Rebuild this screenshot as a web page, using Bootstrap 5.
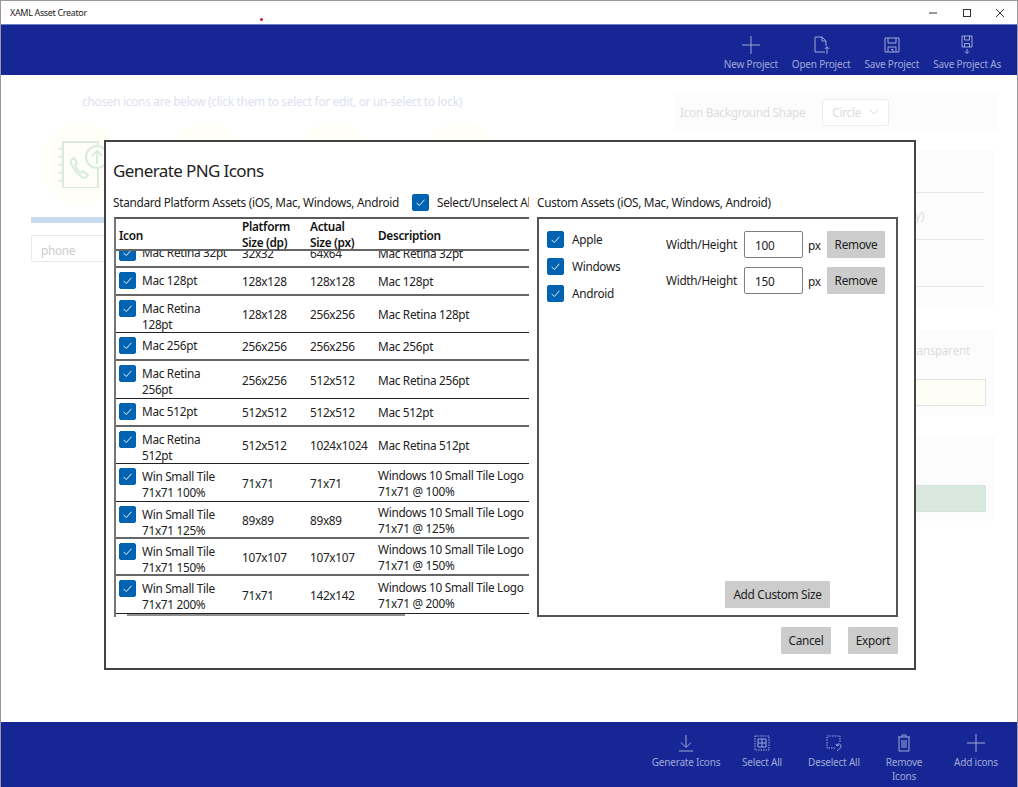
<!DOCTYPE html>
<html lang="en">
<head>
<meta charset="utf-8">
<title>XAML Asset Creator</title>
<link href="https://cdn.jsdelivr.net/npm/bootstrap@5.3.0/dist/css/bootstrap.min.css" rel="stylesheet">
<style>
html,body{margin:0;height:100%;overflow:hidden;background:#fff}
body{font-family:"Noto Sans","Open Sans",sans-serif;font-size:11.800px;letter-spacing:-.3px;line-height:16px;color:#1c1c1c}
.app-shell{position:relative;width:1018px;height:787px;border:1px solid #9a9a9a;border-bottom:0;overflow:hidden;background:#fff}
.title-strip{height:23px;padding:0 0 0 9px;font-size:9px;letter-spacing:-.35px;position:relative;flex:none}
.red-dot{position:absolute;left:259px;top:17px;width:3px;height:3px;border-radius:50%;background:#d3142b}
.win-btn{width:33.500px;display:flex;justify-content:center}
.app-bar{background:#162795;color:#a0a8d6;flex:none}
.app-bar.top-bar{height:51px;padding-right:16px;gap:14px;border-top:1px solid #6e80c8}
.app-bar.foot-bar{height:65px;padding-right:5px}
.bar-cmd{display:flex;flex-direction:column;align-items:center;text-align:center;font-size:10px;letter-spacing:-.2px;line-height:14px;white-space:nowrap;flex:none}
.bar-cmd svg{display:block;fill:none;stroke:#a0a8d6;stroke-width:1;flex:none}
.top-bar .bar-cmd svg{margin-top:10px;margin-bottom:2px}
.foot-bar .bar-cmd svg{margin-top:11px;margin-bottom:2px}
.foot-w76{width:76px}
.foot-w68{width:68px}
.foot-w72{width:72px}
.main-back{height:647px}
.back-left{width:673px;flex:none;padding:17px 0 0 30px;position:relative}
.faint-note{color:#dddff1;padding-left:51px;line-height:18px;letter-spacing:-.25px}
.orb-row{display:flex;gap:45px;margin:13px 0 0 9px;height:82px}
.orb{width:81px;height:82px;border-radius:50%;background:#fffff7;flex:none;display:flex;align-items:center;justify-content:center}
.orb svg{display:block}
.faint-bar{height:6px;background:#c8dcee;margin-top:12px;width:300px}
.faint-input{width:300px;height:27px;border:1px solid #e9e9e9;border-radius:2px;margin-top:12px;padding:6px 9px 0;color:#ccc}
.back-right{width:324px;flex:none;padding-top:17px;color:#dcdcdc}
.soft-panel{background:#fcfcfc}
.panel-shape{height:40px;padding:0 6px;gap:17px}
.fake-select{width:67px;height:27px;border:1px solid #ededed;border-radius:2px;padding:0 9px;justify-content:space-between;background:#fff}
.panel-lines{height:157px;margin-top:18px;width:321px;padding:42px 11px 0 0}
.panel-lines .ln{height:1px;background:#e6e6e6;margin-left:241px}
.panel-lines .tail{height:46px;line-height:44px;padding-left:241px}
.panel-lines .tail2{height:46px}
.panel-fill{width:321px;height:85px;margin-top:23px;padding:0 9px 0 0}
.panel-fill.next{margin-top:21px}
.panel-fill .tx{height:49px;padding:12px 16px 0 0;text-align:right}
.swatch{height:27px;border:1px solid #e3e3e3}
.swatch.y{background:#fffef6}
.swatch.g{background:#d9e9df;border-color:#d3e3d9}
.gen-dialog{position:absolute;left:103px;top:139px;width:812px;height:530px;background:#fff;border:2px solid #444;padding:18px 16px 0 7px;z-index:5}
.dlg-title{font-size:17px;letter-spacing:-.6px;line-height:22px;color:#222}
.dlg-heads{margin-top:11px;height:18px;line-height:18px}
.head-left{width:416px;flex:none;overflow:hidden;white-space:nowrap;margin-right:8px;gap:13px}
.dlg-body{margin-top:6px;height:400px}
.grid-pane{position:relative;width:416px;flex:none;padding-left:1px;margin-right:8px;overflow:hidden}
.grid-inner{height:400px;border-left:2px solid #777;border-top:2px solid #5a5a5a;overflow:hidden}
.grid-scroll{height:365px;overflow:hidden}
.grid-table{table-layout:fixed;width:413px;border-collapse:separate;border-spacing:0;margin:0;--bs-table-bg:transparent}
.grid-table th,.grid-table td{padding:0;border-bottom:2px solid #666;color:#222;vertical-align:middle;box-shadow:none;white-space:nowrap}
.grid-table tr.thin td{border-bottom:1px solid #222}
.grid-table th{font-weight:600;height:32px;padding-top:2px;vertical-align:middle;color:#111}
.th-in{margin:-3px 0 -1px}
.grid-table td.cell-icon{padding:4px 0 0 3px;vertical-align:top}
.grid-table th.cell-icon{padding-left:3px}
.grid-table tr.row-a td{height:28px}
.grid-table tr.row-b td{height:37px}
.grid-table tr.row-c td{height:38px}
.cell-flex{display:flex;gap:6px;align-items:flex-start;margin-bottom:-2px}
.grid-rail{position:absolute;left:14px;top:397px;width:278px;height:2px;background:#8f8f8f}
.form-check-input.tick{width:17px;height:17px;margin:0;flex:none;border-radius:2px;background-color:#0063b1;border:1px solid #0063b1;background-size:13px;background-image:url("data:image/svg+xml,%3csvg xmlns='http://www.w3.org/2000/svg' viewBox='0 0 20 20'%3e%3cpath fill='none' stroke='%23fff' stroke-width='1.4' d='M4 10.5l4.2 4.2L16 5.8'/%3e%3c/svg%3e")}
.custom-pane{width:361px;height:400px;border:2px solid #555;position:relative;padding:12px 12px 0 8px}
.plat-col{width:119px;flex:none;gap:10px;padding-top:0}
.plat-col span{position:relative;top:-1px}
.size-col{gap:9px}
.size-row{height:27px;gap:6px}
.size-label{width:72px;white-space:nowrap;position:relative;top:-1px}
.size-unit{width:13px;margin-left:-1px}
.size-input{width:59px;height:27px;border:1px solid #808080;border-radius:2px;padding:0 10px;font-size:11.800px;letter-spacing:-.3px;color:#222;background:#fff;outline:0}
.gray-btn{background:#ccc;border:0;border-radius:1px;color:#222;font-size:11.800px;letter-spacing:-.3px;line-height:16px;padding:0 0 2px;height:27px}
.gray-btn:hover{background:#ccc;color:#222}
.btn-remove{width:58px;margin-left:0}
.btn-add{position:absolute;left:186px;top:362px;width:105px}
.dlg-actions{margin-top:10px;gap:17px;width:785px}
.dlg-actions .gray-btn{width:50px}
</style>
</head>
<body>
<div class="app-shell d-flex flex-column">
  <div class="title-strip d-flex align-items-center justify-content-between">
    <span>XAML Asset Creator</span>
    <span class="red-dot"></span>
    <div class="d-flex">
      <span class="win-btn"><svg width="10" height="10" viewBox="0 0 10 10"><path d="M1 5h8" stroke="#333" fill="none"/></svg></span>
      <span class="win-btn"><svg width="10" height="10" viewBox="0 0 10 10"><rect x="1.5" y="1.5" width="7" height="7" stroke="#333" fill="none"/></svg></span>
      <span class="win-btn"><svg width="10" height="10" viewBox="0 0 10 10"><path d="M1 1l8 8M9 1l-8 8" stroke="#333" fill="none"/></svg></span>
    </div>
  </div>

  <div class="app-bar top-bar d-flex justify-content-end">
    <div class="bar-cmd"><svg width="20" height="20" viewBox="0 0 20 20"><path d="M10 1v18M1 10h18"/></svg>New Project</div>
    <div class="bar-cmd"><svg width="20" height="20" viewBox="0 0 20 20"><path d="M14 17H4V2h7l4 4v5M11 2v4h4M16 19v-7M13.800 14L16 11.800l2.200 2.200"/></svg>Open Project</div>
    <div class="bar-cmd"><svg width="20" height="20" viewBox="0 0 20 20"><path d="M3 3h14v14H3zM6 3v5h8V3M6 17v-5h8v5M9 14.500h2v2.500"/></svg>Save Project</div>
    <div class="bar-cmd"><svg width="20" height="20" viewBox="0 0 20 20"><path d="M5 1h10v11H5zM7.500 1v4h5V1M7.500 12V8.500h5V12M10 14v4M8 16.500l2 2 2-2"/></svg>Save Project As</div>
  </div>

  <div class="main-back d-flex">
    <div class="back-left">
      <div class="faint-note">chosen icons are below (click them to select for edit, or un-select to lock)</div>
      <div class="orb-row">
        <div class="orb">
          <svg width="48" height="48" viewBox="0 0 48 48" fill="none" stroke="#d9ebe0" stroke-width="2"><path d="M6 2h35v46H6zM6 9H2M6 17H2M6 25H2M6 33H2M6 41H2"/><path d="M14 20c-2 3 8 18 14 18l3-3-5-4-2 2c-2-1-5-5-6-8l2-2-3-5z"/><circle cx="40" cy="17" r="11" fill="#fffff7"/><path d="M40 24V11M35 16l5-5 5 5"/></svg>
        </div>
        <div class="orb"></div><div class="orb"></div><div class="orb"></div>
      </div>
      <div class="faint-bar"></div>
      <div class="faint-input">phone</div>
    </div>
    <div class="back-right">
      <div class="soft-panel panel-shape d-flex align-items-center">
        <span>Icon Background Shape</span>
        <span class="fake-select d-flex align-items-center"><span>Circle</span><svg width="10" height="6" viewBox="0 0 10 6"><path d="M.5.5L5 5 9.500.5" fill="none" stroke="#ddd"/></svg></span>
      </div>
      <div class="soft-panel panel-lines">
        <div class="ln"></div>
        <div class="tail">y)</div>
        <div class="ln"></div>
        <div class="tail2"></div>
        <div class="ln"></div>
      </div>
      <div class="soft-panel panel-fill">
        <div class="tx">transparent</div>
        <div class="swatch y"></div>
      </div>
      <div class="soft-panel panel-fill next">
        <div class="tx"></div>
        <div class="swatch g"></div>
      </div>
    </div>
  </div>

  <div class="app-bar foot-bar d-flex justify-content-end mt-auto">
    <div class="bar-cmd foot-w76"><svg width="20" height="20" viewBox="0 0 20 20"><path d="M10 2v12M5 9.500l5 5 5-5M3 18h14"/></svg>Generate Icons</div>
    <div class="bar-cmd foot-w76"><svg width="20" height="20" viewBox="0 0 20 20"><path d="M3 3h14v14H3z" stroke-dasharray="1.500 1"/><path d="M6 6h8v8H6zM10 6v8M6 10h8"/></svg>Select All</div>
    <div class="bar-cmd foot-w68"><svg width="20" height="20" viewBox="0 0 20 20"><path d="M11 15H3V3h13v7" stroke-dasharray="1.500 1"/><path d="M13 12c1-2 4-1 4 1 0 2-2 3-4 5M12 11l1 2 2-1"/></svg>Deselect All</div>
    <div class="bar-cmd foot-w72"><svg width="20" height="20" viewBox="0 0 20 20"><path d="M4 4h12M8 4V2h4v2M5 4v14h10V4M8 7v8M10 7v8M12 7v8"/></svg>Remove<br>Icons</div>
    <div class="bar-cmd foot-w72"><svg width="20" height="20" viewBox="0 0 20 20"><path d="M10 1v18M1 10h18"/></svg>Add icons</div>
  </div>

  <div class="gen-dialog" role="dialog">
    <div class="dlg-title">Generate PNG Icons</div>
    <div class="dlg-heads d-flex">
      <div class="head-left d-flex align-items-center">
        <span>Standard Platform Assets (iOS, Mac, Windows, Android</span>
        <span class="d-flex align-items-center gap-2"><input class="form-check-input tick" type="checkbox" checked aria-label="Select all"><span>Select/Unselect All</span></span>
      </div>
      <div>Custom Assets (iOS, Mac, Windows, Android)</div>
    </div>
    <div class="dlg-body d-flex">
      <div class="grid-pane">
        <div class="grid-inner">
          <table class="table grid-table">
            <colgroup><col style="width:126px"><col style="width:68px"><col style="width:68px"><col></colgroup>
            <thead><tr><th class="cell-icon">Icon</th><th><div class="th-in">Platform<br>Size (dp)</div></th><th><div class="th-in">Actual<br>Size (px)</div></th><th>Description</th></tr></thead>
          </table>
          <div class="grid-scroll">
          <table class="table grid-table" style="margin-top:-11px">
            <colgroup><col style="width:126px"><col style="width:68px"><col style="width:68px"><col></colgroup>
            <tbody>
            <tr class="row-a"><td class="cell-icon"><div class="cell-flex"><input class="form-check-input tick" type="checkbox" checked aria-label="Mac Retina 32pt"><span>Mac Retina 32pt</span></div></td><td>32x32</td><td>64x64</td><td>Mac Retina 32pt</td></tr>
            <tr class="row-a"><td class="cell-icon"><div class="cell-flex"><input class="form-check-input tick" type="checkbox" checked aria-label="Mac 128pt"><span>Mac 128pt</span></div></td><td>128x128</td><td>128x128</td><td>Mac 128pt</td></tr>
            <tr class="row-b thin"><td class="cell-icon"><div class="cell-flex"><input class="form-check-input tick" type="checkbox" checked aria-label="Mac Retina 128pt"><span>Mac Retina<br>128pt</span></div></td><td>128x128</td><td>256x256</td><td>Mac Retina 128pt</td></tr>
            <tr class="row-a"><td class="cell-icon"><div class="cell-flex"><input class="form-check-input tick" type="checkbox" checked aria-label="Mac 256pt"><span>Mac 256pt</span></div></td><td>256x256</td><td>256x256</td><td>Mac 256pt</td></tr>
            <tr class="row-c thin"><td class="cell-icon"><div class="cell-flex"><input class="form-check-input tick" type="checkbox" checked aria-label="Mac Retina 256pt"><span>Mac Retina<br>256pt</span></div></td><td>256x256</td><td>512x512</td><td>Mac Retina 256pt</td></tr>
            <tr class="row-a"><td class="cell-icon"><div class="cell-flex"><input class="form-check-input tick" type="checkbox" checked aria-label="Mac 512pt"><span>Mac 512pt</span></div></td><td>512x512</td><td>512x512</td><td>Mac 512pt</td></tr>
            <tr class="row-b thin"><td class="cell-icon"><div class="cell-flex"><input class="form-check-input tick" type="checkbox" checked aria-label="Mac Retina 512pt"><span>Mac Retina<br>512pt</span></div></td><td>512x512</td><td>1024x1024</td><td>Mac Retina 512pt</td></tr>
            <tr class="row-c thin"><td class="cell-icon"><div class="cell-flex"><input class="form-check-input tick" type="checkbox" checked aria-label="Win Small Tile 100"><span>Win Small Tile<br>71x71 100%</span></div></td><td>71x71</td><td>71x71</td><td>Windows 10 Small Tile Logo<br>71x71 @ 100%</td></tr>
            <tr class="row-b"><td class="cell-icon"><div class="cell-flex"><input class="form-check-input tick" type="checkbox" checked aria-label="Win Small Tile 125"><span>Win Small Tile<br>71x71 125%</span></div></td><td>89x89</td><td>89x89</td><td>Windows 10 Small Tile Logo<br>71x71 @ 125%</td></tr>
            <tr class="row-b"><td class="cell-icon"><div class="cell-flex"><input class="form-check-input tick" type="checkbox" checked aria-label="Win Small Tile 150"><span>Win Small Tile<br>71x71 150%</span></div></td><td>107x107</td><td>107x107</td><td>Windows 10 Small Tile Logo<br>71x71 @ 150%</td></tr>
            <tr class="row-c thin"><td class="cell-icon"><div class="cell-flex"><input class="form-check-input tick" type="checkbox" checked aria-label="Win Small Tile 200"><span>Win Small Tile<br>71x71 200%</span></div></td><td>71x71</td><td>142x142</td><td>Windows 10 Small Tile Logo<br>71x71 @ 200%</td></tr>
            </tbody>
          </table>
          </div>
        </div>
        <div class="grid-rail"></div>
      </div>
      <div class="custom-pane d-flex">
        <div class="plat-col d-flex flex-column">
          <div class="d-flex gap-2 align-items-center"><input class="form-check-input tick" type="checkbox" checked aria-label="Apple"><span>Apple</span></div>
          <div class="d-flex gap-2 align-items-center"><input class="form-check-input tick" type="checkbox" checked aria-label="Windows"><span>Windows</span></div>
          <div class="d-flex gap-2 align-items-center"><input class="form-check-input tick" type="checkbox" checked aria-label="Android"><span>Android</span></div>
        </div>
        <div class="size-col d-flex flex-column">
          <div class="size-row d-flex align-items-center"><span class="size-label">Width/Height</span><input class="size-input" value="100" aria-label="Width/Height"><span class="size-unit">px</span><button class="btn gray-btn btn-remove">Remove</button></div>
          <div class="size-row d-flex align-items-center"><span class="size-label">Width/Height</span><input class="size-input" value="150" aria-label="Width/Height"><span class="size-unit">px</span><button class="btn gray-btn btn-remove">Remove</button></div>
        </div>
        <button class="btn gray-btn btn-add">Add Custom Size</button>
      </div>
    </div>
    <div class="dlg-actions d-flex justify-content-end">
      <button class="btn gray-btn">Cancel</button>
      <button class="btn gray-btn">Export</button>
    </div>
  </div>
</div>
<script src="https://cdn.jsdelivr.net/npm/bootstrap@5.3.0/dist/js/bootstrap.bundle.min.js"></script>
</body>
</html>
